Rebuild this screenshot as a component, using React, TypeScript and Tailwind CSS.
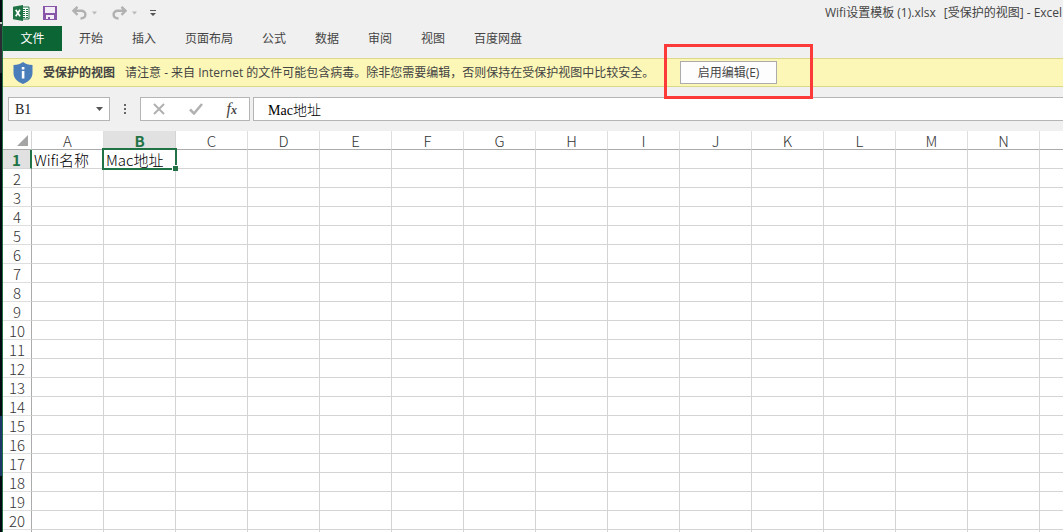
import React from 'react';

const tabs = ['开始', '插入', '页面布局', '公式', '数据', '审阅', '视图', '百度网盘'];
const columns = 'ABCDEFGHIJKLMN'.split('');
const rows = Array.from({ length: 20 }, (_, i) => i + 1);
const values: Record<string, string> = { A1: 'Wifi名称', B1: 'Mac地址' };

const uiFont = "font-['Open_Sans','Noto_Sans_CJK_SC',sans-serif]";
const gridFont = "font-['Noto_Sans_CJK_SC',sans-serif]";
const serifFont = "font-['Liberation_Serif','Noto_Sans_CJK_SC',serif]";

function ExcelLogo() {
  return (
    <svg width="17" height="16" viewBox="0 0 17 16" aria-hidden="true">
      <path d="M9 2h7v12H9z" fill="#fff" stroke="#1f7244" />
      <path d="M10 4.5h2M13 4.5h2M10 6.5h2M13 6.5h2M10 8.5h2M13 8.5h2M10 10.5h2M13 10.5h2M10 12.5h2M13 12.5h2" stroke="#1f7244" />
      <path d="M0 1.8 10 0v16L0 14.2z" fill="#1f7244" />
      <path d="m2.7 4.8 4.3 6.4M7 4.8l-4.3 6.4" stroke="#fff" strokeWidth="1.6" />
    </svg>
  );
}

function SaveIcon() {
  return (
    <svg width="14" height="14" viewBox="0 0 14 14" aria-hidden="true">
      <path d="M0 0h14v14H0z" fill="#8756a8" />
      <path d="M2 1h10v6H2z" fill="#f3eef6" />
      <path d="M3 9h8v4H7v-2H5v2H3z" fill="#f3eef6" />
    </svg>
  );
}

function UndoIcon() {
  return (
    <svg width="15" height="14" viewBox="0 0 15 14" fill="none" stroke="#b1b1b1" strokeWidth="2.4" aria-hidden="true">
      <path d="M5.5.8 1.5 4.8l4 4M2 4.8h7.2c2.6 0 4.2 1.5 4.2 3.7 0 2.4-1.8 4-4.9 4" />
    </svg>
  );
}

function RedoIcon() {
  return (
    <svg width="15" height="14" viewBox="0 0 15 14" fill="none" stroke="#b1b1b1" strokeWidth="2.4" aria-hidden="true">
      <path d="m9.5.8 4 4-4 4M13 4.8H5.8c-2.6 0-4.2 1.5-4.2 3.7 0 2.4 1.8 4 4.9 4" />
    </svg>
  );
}

function Caret({ className }: { className: string }) {
  return (
    <svg width="7" height="4" viewBox="0 0 7 4" className={className} aria-hidden="true">
      <path d="M0 0h7L3.5 4z" fill="currentColor" />
    </svg>
  );
}

function TitleBar() {
  return (
    <header className="flex h-[26px] items-center pl-2.5">
      <ExcelLogo />
      <button type="button" aria-label="保存" className="ml-[13px]"><SaveIcon /></button>
      <button type="button" aria-label="撤消" className="ml-[15px] flex h-5 items-center gap-[5px]">
        <UndoIcon />
        <Caret className="w-[5px] text-[#b8b8b8]" />
      </button>
      <button type="button" aria-label="恢复" className="ml-[15px] flex h-5 items-center gap-[5px]">
        <RedoIcon />
        <Caret className="w-[5px] text-[#b8b8b8]" />
      </button>
      <button type="button" aria-label="自定义快速访问工具栏" className="ml-[13px]">
        <svg width="6" height="6" viewBox="0 0 6 6" aria-hidden="true">
          <path d="M0 0h6v1H0zM0 3h6L3 6z" fill="#555" />
        </svg>
      </button>
      <h1 className="ml-auto flex w-[238px] shrink-0 gap-2 text-xs whitespace-nowrap text-[#444]">
        <span>Wifi设置模板 (1).xlsx</span>
        <span>[受保护的视图] - Excel</span>
      </h1>
    </header>
  );
}

function Ribbon() {
  return (
    <nav className="flex h-8 items-start text-xs text-[#444]">
      <button type="button" className="h-[25px] w-[59px] bg-[#0c6534] text-white">文件</button>
      <div className="ml-[17px] flex h-[25px] items-center gap-[29px]">
        {tabs.map((t) => (
          <button type="button" key={t}>{t}</button>
        ))}
      </div>
    </nav>
  );
}

function MessageBar() {
  return (
    <div className="flex h-[29px] items-center border-y border-[#dad889] bg-[#fcf7b6] pl-2.5 text-xs whitespace-nowrap text-[#444]">
      <svg width="20" height="22" viewBox="0 0 20 22" aria-hidden="true">
        <path d="M10 0c2.5 2 5.6 3 9.500 3v8c0 5-3.500 8.500-9.500 11C4 19.500.5 16 .5 11V3C4.400 3 7.500 2 10 0z" fill="#4a7ebb" />
        <path d="M8.800 5h2.600v2.400H8.800zM8.800 9h2.600v7.500H8.800z" fill="#fff" />
      </svg>
      <strong className="ml-2.5 font-bold">受保护的视图</strong>
      <span className="ml-2.5 w-[555px]">
        请注意 - 来自 Internet 的文件可能包含病毒。除非您需要编辑，否则保持在受保护视图中比较安全。
      </span>
      <div className="relative">
        <button type="button" className="block h-[23px] w-[97px] border border-[#ababab] bg-[#fdfdfd]">
          启用编辑(E)
        </button>
        <div className="pointer-events-none absolute -top-[17px] -right-9 -bottom-[15px] -left-4 border-3 border-[#fd3a3a]" />
      </div>
    </div>
  );
}

function FormulaBar() {
  return (
    <div className="flex h-11 items-center pl-[5px]">
      <div className="flex h-6 w-[102px] items-center border border-[#b5b5b5] bg-white">
        <input aria-label="名称框" defaultValue="B1" className={`h-full min-w-0 flex-1 pt-0.5 pl-1.5 text-sm text-[#222] outline-none ${serifFont}`} />
        <button type="button" aria-label="选择名称" className="flex h-full w-5 items-center justify-center text-[#555]">
          <Caret className="" />
        </button>
      </div>
      <svg width="2" height="11" viewBox="0 0 2 11" className="mx-3.5" aria-hidden="true">
        <path d="M0 0h2v2H0zM0 4h2v2H0zM0 8h2v2H0z" fill="#666" />
      </svg>
      <div className="flex h-6 w-[110px] items-center justify-between border border-[#b5b5b5] bg-white px-3">
        <button type="button" aria-label="取消">
          <svg width="12" height="12" viewBox="0 0 12 12" fill="none" stroke="#b1b1b1" strokeWidth="2" aria-hidden="true">
            <path d="m1 1 10 10M11 1 1 11" />
          </svg>
        </button>
        <button type="button" aria-label="输入">
          <svg width="14" height="12" viewBox="0 0 14 12" fill="none" stroke="#b1b1b1" strokeWidth="2.5" aria-hidden="true">
            <path d="m1 6.5 4 4L13 1" />
          </svg>
        </button>
        <button type="button" aria-label="插入函数" className="font-['Liberation_Serif',serif] text-base leading-4 text-[#444] italic">
          f<span className="text-xs font-bold">x</span>
        </button>
      </div>
      <input
        aria-label="编辑栏"
        defaultValue="Mac地址"
        className={`ml-[3px] h-6 min-w-0 flex-1 border border-r-0 border-[#b5b5b5] bg-white pl-3.5 text-sm font-light text-black outline-none ${serifFont}`}
      />
    </div>
  );
}

function Sheet() {
  return (
    <div className={`min-h-0 flex-1 bg-white ${gridFont}`}>
      <table className="w-[1109px] table-fixed border-separate border-spacing-0 text-[15px] leading-4 text-[#333]">
        <colgroup>
          <col className="w-[29px]" />
          {columns.map((c) => <col key={c} className="w-[72px]" />)}
          <col className="w-[72px]" />
        </colgroup>
        <thead>
          <tr className="h-[19px]">
            <th className="border-r border-b border-r-[#d4d4d4] border-b-[#ababab] p-0">
              <svg width="11" height="11" viewBox="0 0 11 11" className="mr-[3px] ml-auto" aria-hidden="true">
                <path d="M11 0v11H0z" fill="#a5a5a5" />
              </svg>
            </th>
            {columns.map((c) => (
              <th
                key={c}
                scope="col"
                className={c === 'B'
                  ? 'border-r border-b border-r-[#d4d4d4] border-b-[#ababab] bg-[#e1e1e1] p-0 pt-0.5 font-bold text-[#217346]'
                  : 'border-r border-b border-r-[#dedede] border-b-[#ababab] p-0 pt-0.5 font-light'}
              >
                {c}
              </th>
            ))}
            <th className="border-b border-[#ababab] p-0" />
          </tr>
        </thead>
        <tbody>
          {rows.map((r) => (
            <tr key={r} className="h-[19px]">
              <th
                scope="row"
                className={r === 1
                  ? 'border-r-2 border-b border-r-[#217346] border-b-[#d4d4d4] bg-[#e1e1e1] p-0 pt-0.5 font-bold text-[#217346]'
                  : 'border-r border-b border-r-[#ababab] border-b-[#dedede] p-0 pt-0.5 font-light'}
              >
                {r}
              </th>
              {columns.map((c) => (
                <td key={c} className="relative border-r border-b border-[#d4d4d4] p-0 pt-0.5 pl-0.5 font-light whitespace-nowrap text-black">
                  {values[c + r]}
                  {c + r === 'B1' && (
                    <div className="pointer-events-none absolute -top-0.5 -right-0.5 -bottom-0.5 -left-0.5 z-10 border-2 border-[#217346]">
                      <div className="absolute -right-[3px] -bottom-[3px] size-1.5 border-t border-l border-white bg-[#217346]" />
                    </div>
                  )}
                </td>
              ))}
              <td className="border-b border-[#d4d4d4] p-0" />
            </tr>
          ))}
          <tr className="h-[19px]">
            <td className="border-r border-[#ababab] p-0" />
            {columns.map((c) => <td key={c} className="border-r border-[#d4d4d4] p-0" />)}
            <td className="p-0" />
          </tr>
        </tbody>
      </table>
    </div>
  );
}

export default function App() {
  return (
    <div className={`flex h-screen overflow-hidden bg-[#f0f0f0] ${uiFont}`}>
      <div className="flex w-0.5 shrink-0 flex-col bg-[#050a12]">
        <div className="mt-[22px] h-0.5 bg-[#c8c8c8]" />
        <div className="h-[49px] bg-[#2a2c33]" />
        <div className="mt-[343px] h-[60px] bg-[#1d3768]" />
      </div>
      <main className="flex min-w-0 flex-1 flex-col border-l border-[#217346]">
        <TitleBar />
        <Ribbon />
        <MessageBar />
        <FormulaBar />
        <Sheet />
      </main>
    </div>
  );
}
